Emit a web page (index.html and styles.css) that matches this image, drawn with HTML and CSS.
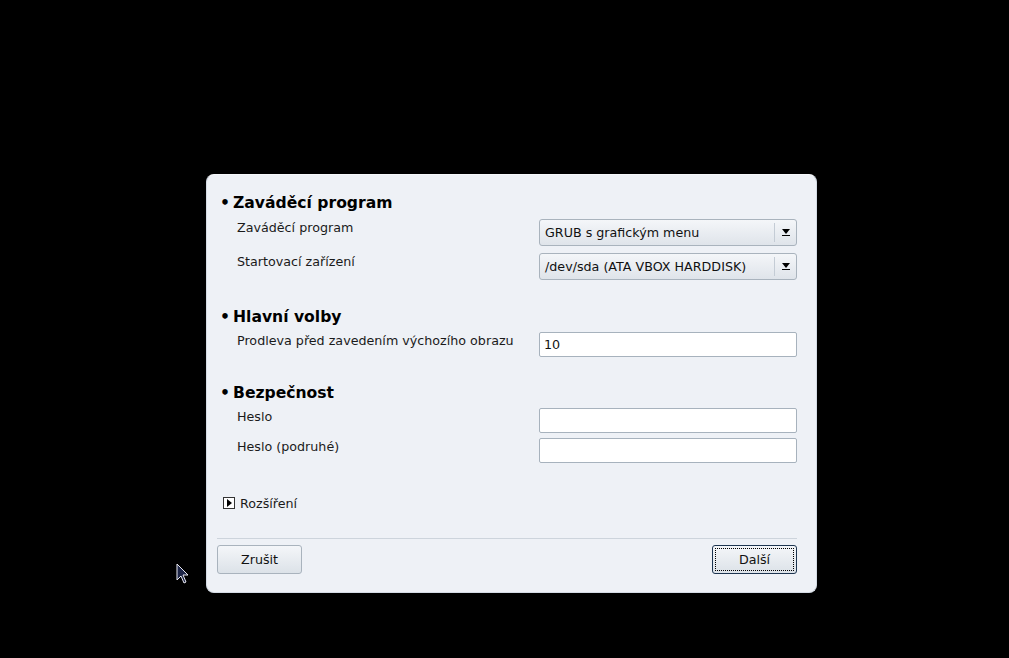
FILE: index.html
```html
<!DOCTYPE html>
<html lang="cs">
<head>
    <meta charset="UTF-8">
    <title>Zaváděcí program</title>
    <link rel="stylesheet" href="styles.css">
</head>
<body>
    <div class="dialog">
        <div class="section">
            <h2><span class="dot">•</span>Zaváděcí program</h2>
            <div class="row">
                <span class="label">Zaváděcí program</span>
                <div class="combo"><span>GRUB s grafickým menu</span><i class="arrow"></i></div>
            </div>
            <div class="row">
                <span class="label">Startovací zařízení</span>
                <div class="combo"><span>/dev/sda (ATA VBOX HARDDISK)</span><i class="arrow"></i></div>
            </div>
        </div>
        <div class="section">
            <h2><span class="dot">•</span>Hlavní volby</h2>
            <div class="row">
                <span class="label">Prodleva před zavedením výchozího obrazu</span>
                <div class="entry">10</div>
            </div>
        </div>
        <div class="section">
            <h2><span class="dot">•</span>Bezpečnost</h2>
            <div class="row">
                <span class="label">Heslo</span>
                <div class="entry"></div>
            </div>
            <div class="row tight">
                <span class="label">Heslo (podruhé)</span>
                <div class="entry"></div>
            </div>
        </div>
        <div class="expander">
            <span class="tri"></span>Rozšíření
        </div>
        <div class="buttons">
            <button class="btn">Zrušit</button>
            <button class="btn default"><span>Další</span></button>
        </div>
    </div>
    <svg class="cursor" width="14" height="22" viewBox="0 0 14 22">
        <path d="M1 1 L1 17 L5 13 L8 20 L10 19 L7 12 L12 12 Z" fill="#1c2446" stroke="#e8e8f0" stroke-width="1"/>
    </svg>
</body>
</html>
```

FILE: styles.css
```css
* {
    box-sizing: border-box;
}

body {
    margin: 0;
    height: 658px;
    background: #000;
    font-family: "DejaVu Sans", sans-serif;
    font-size: 12.7px;
    color: #1a1a1a;
    position: relative;
}

.dialog {
    position: absolute;
    left: 206px;
    top: 174px;
    width: 611px;
    height: 419px;
    background: #eef1f6;
    border: 1px solid #d4dbe4;
    border-top-color: #f6f8fb;
    border-radius: 8px;
    padding: 17px 19px 0 10px;
    display: flex;
    flex-direction: column;
}

h2 {
    margin: 0;
    font-size: 15.6px;
    font-weight: bold;
    color: #000;
    height: 22px;
    line-height: 22px;
    display: flex;
}

.dot {
    width: 16px;
    padding-left: 3px;
}

.section {
    display: flex;
    flex-direction: column;
}

.row {
    display: flex;
    justify-content: space-between;
    align-items: flex-start;
    padding-left: 20px;
    margin-top: 4px;
}

.row.tight {
    margin-top: 5px;
}

.section:first-child .row {
    margin-top: 5px;
}

.section:first-child .row + .row {
    margin-top: 7px;
}

.label {
    line-height: 15px;
    margin-top: 1px;
}

.combo {
    width: 258px;
    height: 27px;
    border: 1px solid #a9b3bd;
    border-radius: 3px;
    background: linear-gradient(#f4f6f9, #dfe4ea);
    display: flex;
    align-items: center;
    padding-left: 5px;
    color: #111;
}

.combo span {
    flex: 1;
}

.arrow {
    width: 22px;
    height: 19px;
    border-left: 1px solid #c4ccd5;
    position: relative;
}

.arrow::before {
    content: "";
    position: absolute;
    left: 7px;
    top: 6px;
    border-left: 4px solid transparent;
    border-right: 4px solid transparent;
    border-top: 5px solid #000;
}

.arrow::after {
    content: "";
    position: absolute;
    left: 7px;
    top: 12px;
    width: 8px;
    height: 1px;
    background: #000;
}

.entry {
    width: 258px;
    height: 25px;
    background: #fff;
    border: 1px solid #a7b2bd;
    border-radius: 2px;
    padding: 4px 4px;
    color: #111;
}

.section:nth-child(2) {
    margin-top: 26px;
}

.section:nth-child(3) {
    margin-top: 25px;
}

.expander {
    margin-top: 32px;
    margin-left: 6px;
    display: flex;
    align-items: center;
    height: 16px;
}

.tri {
    width: 12px;
    height: 12px;
    border: 1px solid #333;
    margin-right: 5px;
    position: relative;
    background: #fff;
}

.tri::after {
    content: "";
    position: absolute;
    left: 3px;
    top: 1px;
    border-top: 4px solid transparent;
    border-bottom: 4px solid transparent;
    border-left: 5px solid #000;
}

.buttons {
    margin-top: 27px;
    border-top: 1px solid #cdd4dc;
    padding-top: 6px;
    display: flex;
    justify-content: space-between;
}

.btn {
    width: 85px;
    height: 29px;
    font-family: "DejaVu Sans", sans-serif;
    font-size: 12.7px;
    color: #111;
    border: 1px solid #a9b3bd;
    border-radius: 3px;
    background: linear-gradient(#f4f6f9, #dce2e8);
    padding: 0;
}

.btn.default {
    border: 1px solid #1d3550;
    padding: 2px;
}

.btn.default span {
    display: flex;
    align-items: center;
    justify-content: center;
    height: 100%;
    border: 1px dotted #000;
}

.cursor {
    position: absolute;
    left: 176px;
    top: 563px;
}
```
